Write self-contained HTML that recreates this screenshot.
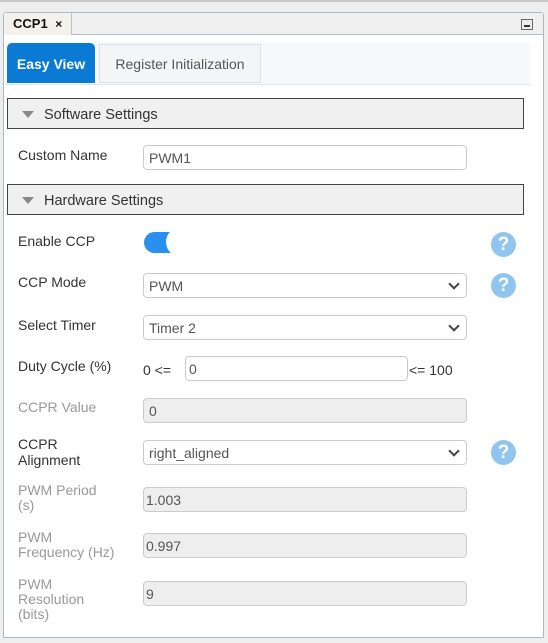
<!DOCTYPE html>
<html><head><style>
body{margin:0;width:548px;height:643px;background:#eeeeee;font-family:"Liberation Sans",sans-serif;font-size:14px;color:#333;position:relative;overflow:hidden}
.a{position:absolute}
.inp{position:absolute;left:143px;width:322px;height:25px;border:1px solid #ccc;border-radius:4px;background:#fff;box-sizing:border-box;padding-left:5px;line-height:25px;font-size:14px;color:#555}
.dis{background:#eeeeee;color:#555}
.sel::after{content:"";position:absolute;right:8px;top:6px;width:6px;height:6px;border-right:2px solid #444;border-bottom:2px solid #444;transform:rotate(45deg)}
.lbl{position:absolute;left:18px;font-size:14px;color:#333;line-height:16px}
.lbl.g{color:#999}
.help{position:absolute;left:491px;width:25px;height:25px;border-radius:50%;background:#8fc5ef;color:#fff;font-weight:bold;font-size:19px;text-align:center;line-height:25px}
.bar{position:absolute;left:7px;width:517px;height:31px;background:#f0f0f0;border:1px solid #444;box-sizing:border-box;line-height:33px;padding-left:36px;font-size:14.5px;color:#333}
.bar::before{content:"";position:absolute;left:14px;top:12px;border-left:6px solid transparent;border-right:6px solid transparent;border-top:7px solid #888}
</style></head><body>
<div class="a" style="left:0;top:0;width:548px;height:2px;background:#c8c8c8"></div>
<div class="a" style="left:3px;top:12px;width:541px;height:626px;border:1px solid #a9b9cc;box-sizing:border-box;background:#fff;border-radius:3px 3px 0 0"></div>
<div class="a" style="left:4px;top:13px;width:539px;height:21px;background:#f0f0f0;border-bottom:1px solid #b0bccb"></div>
<div class="a" style="left:4px;top:13px;width:68px;height:22px;background:#f4f1ea;border-right:1px solid #b8c2cc;font-weight:bold;font-size:13px;line-height:22px;padding-left:9px;box-sizing:border-box;color:#111">CCP1 <span style="font-size:12px;margin-left:4px">×</span></div>
<div class="a" style="left:521px;top:19px;width:12px;height:11px;border:1px solid #666;box-sizing:border-box;background:#eee"><div class="a" style="left:2px;top:5px;width:6px;height:2px;background:#333"></div></div>
<div class="a" style="left:5px;top:42px;width:525px;height:42px;background:#f7f8fa;border-bottom:1px solid #e0e3e8"></div>
<div class="a" style="left:7px;top:43px;width:88px;height:40px;background:#0a7ad4;border-radius:5px 5px 0 0;color:#fff;font-weight:bold;font-size:14px;line-height:42px;text-align:center">Easy View</div>
<div class="a" style="left:99px;top:44px;width:162px;height:39px;background:#f4f5f7;border:1px solid #dcdfe4;box-sizing:border-box;color:#555;font-size:14px;line-height:39px;text-align:center">Register Initialization</div>
<div class="bar" style="top:98px">Software Settings</div>
<div class="lbl" style="top:147px">Custom Name</div>
<div class="inp" style="top:145px;width:324px">PWM1</div>
<div class="bar" style="top:184px">Hardware Settings</div>
<div class="lbl" style="top:233px">Enable CCP</div>
<div class="a" style="left:144px;top:232px;width:36px;height:21px;border-radius:11px;background:#2b8ff0"></div>
<div class="a" style="left:166px;top:229px;width:22px;height:26px;border-radius:50%;background:#fff"></div>
<div class="help" style="top:232px">?</div>
<div class="lbl" style="top:274px">CCP Mode</div>
<div class="inp sel" style="top:273px;width:324px">PWM</div>
<div class="help" style="top:273px">?</div>
<div class="lbl" style="top:317px">Select Timer</div>
<div class="inp sel" style="top:315px;width:324px">Timer 2</div>
<div class="lbl" style="top:358px">Duty Cycle (%)</div>
<div class="a" style="left:143px;top:362px;font-size:14px">0 &lt;=</div>
<div class="inp" style="left:185px;top:356px;width:223px;padding-left:3px">0</div>
<div class="a" style="left:409px;top:362px;font-size:14px">&lt;= 100</div>
<div class="lbl g" style="top:399px">CCPR Value</div>
<div class="inp dis" style="top:398px;width:324px">0</div>
<div class="lbl" style="top:436px">CCPR<br>Alignment</div>
<div class="inp sel" style="top:440px;width:324px">right_aligned</div>
<div class="help" style="top:440px">?</div>
<div class="lbl g" style="top:483px;line-height:15px">PWM Period<br>(s)</div>
<div class="inp dis" style="top:487px;width:324px;padding-left:2px">1.003</div>
<div class="lbl g" style="top:530px;line-height:15px">PWM<br>Frequency (Hz)</div>
<div class="inp dis" style="top:533px;width:324px;padding-left:2px">0.997</div>
<div class="lbl g" style="top:577px;line-height:15px">PWM<br>Resolution<br>(bits)</div>
<div class="inp dis" style="top:581px;width:324px;padding-left:2px">9</div>
</body></html>
